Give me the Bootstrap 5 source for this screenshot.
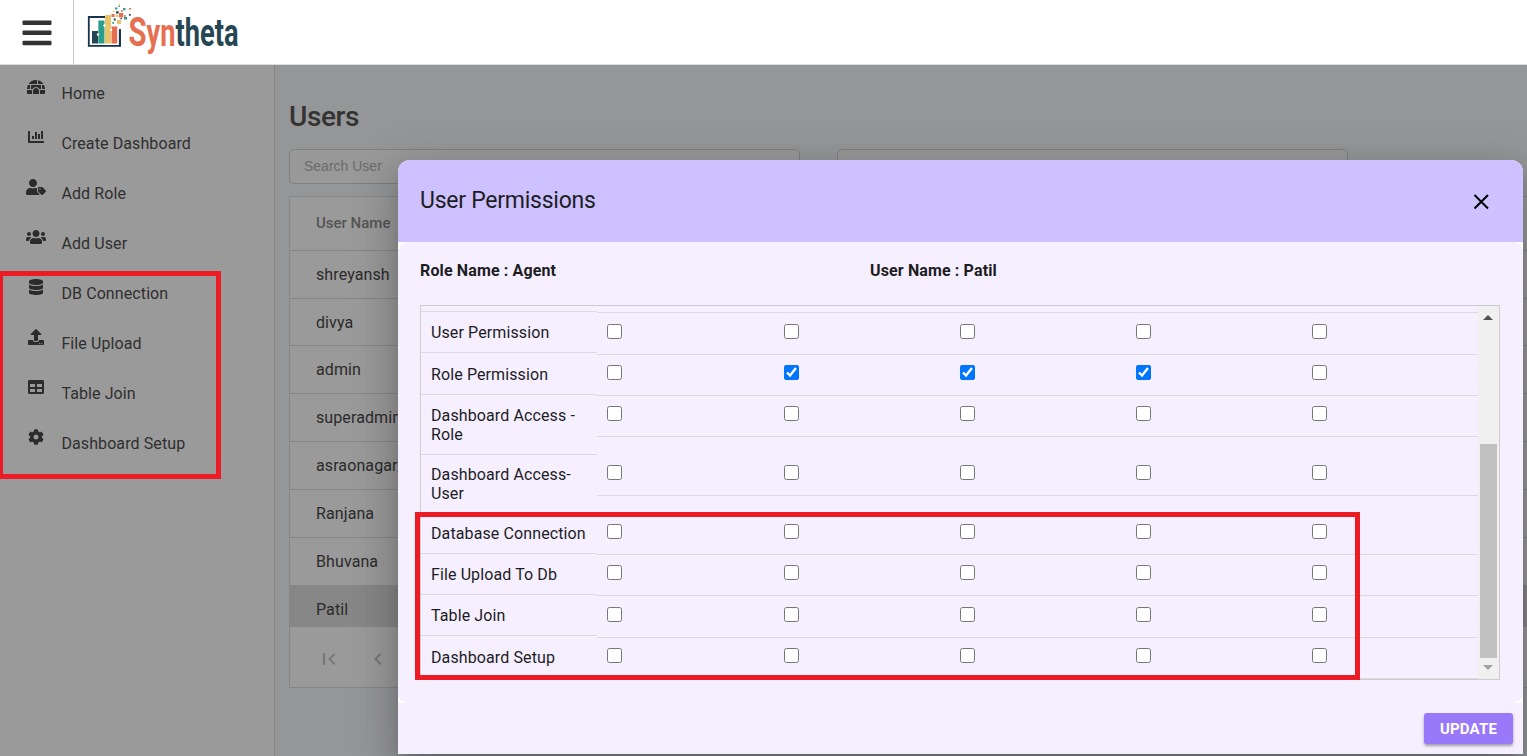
<!DOCTYPE html>
<html lang="en">
<head>
<meta charset="utf-8">
<meta name="viewport" content="width=device-width, initial-scale=1">
<title>Syntheta - Users</title>
<link href="https://cdn.jsdelivr.net/npm/bootstrap@5.3.0/dist/css/bootstrap.min.css" rel="stylesheet">
<style>
  body { font-family: Roboto, sans-serif; font-size: 16px; color: #2b2b2b; background: #959698; }
  .app { height: 756px; }
  .topbar { height: 65px; border-bottom: 1px solid #ddd; z-index: 3; }
  .burger { width: 74px; border-right: 1px solid #ccc; }
  .sidebar { width: 275px; background: #9a9a9a; border-right: 1px solid #858585; padding-top: 3px; }
  .side-link { height: 50px; padding-left: 26px; color: #2f2f2f; line-height: 52px; letter-spacing: .1px; }
  .side-link svg { width: 20px; height: 16px; margin: 11px 15.4px 0 0; fill: #2b2b2b; }
  .content { padding: 34px 0 0 14px; }
  .page-title { font-size: 28px; line-height: 36px; font-weight: 500; color: #333; margin-bottom: 14px; letter-spacing: -.4px; }
  .filters { gap: 37px; margin-bottom: 12px; }
  .search-box { width: 511px; height: 35px; border: 1px solid #808081; border-radius: 5px; background: #999; padding-left: 14px; font: 14px/33px "Liberation Sans", sans-serif; color: #6b6b6b; }
  .grid-panel { width: 1300px; border: 1px solid #858688; background: #9a9a9a; height: 492px; }
  .grid-panel > div { padding-left: 26px; }
  .grid-head { height: 54px; line-height: 53px; font-size: 15px; font-weight: 500; color: #555; border-bottom: 1px solid #858688; }
  .grid-line { height: 48px; line-height: 47px; border-bottom: 1px solid #858688; letter-spacing: .1px; }
  .grid-line:nth-child(3) { height: 47px; }
  .grid-line.picked { height: 41px; background: #878787; border: 0; }
  .pager { height: 63px; gap: 25px; }
  .pager svg { width: 24px; height: 24px; fill: #777; margin-left: .6px; }
  .overlay { z-index: 5; padding: 160px 4px 2px 398px; }
  .dialog { height: 594px; background: #fff; border-radius: 12px 12px 0 0; color: #1d1d1f;
    box-shadow: 0 11px 15px -7px rgba(0,0,0,.2), 0 24px 38px 3px rgba(0,0,0,.14), 0 9px 46px 8px rgba(0,0,0,.12); }
  .dialog-top { height: 82px; background: #cdc1ff; border-radius: 12px 12px 0 0; padding: 0 32px 0 22px; }
  .dialog-title { font-size: 23px; line-height: 28px; letter-spacing: -.25px; }
  .dialog-main { height: 461px; background: #f5efff; border-radius: 10px; padding: 18px 23px 0 22px; }
  .facts { height: 45px; font-weight: 700; line-height: 21px; letter-spacing: .13px; }
  .facts span { width: 450px; }
  .matrix { height: 375px; border: 1px solid #ccc; }
  .stub { height: 7px; }
  .stub .label-col { height: 6px; padding: 0; }
  .stub .check-col { height: 7px; padding: 0; }
  .label-col { width: 176px; height: 40px; padding: 10px 0 0 10px; line-height: 19px; letter-spacing: .11px; border-bottom: 1px solid #dcdadd; }
  .perm { height: 41px; }
  .perm.snug { height: 42px; }
  .perm.two { height: 59px; }
  .two .label-col { height: 59px; }
  .check-col { height: 41px; padding: 10px 0 0 10.3px; border-bottom: 1px solid #dcdadd; }
  .snug .check-col { height: 42px; padding-top: 10.5px; }
  .check-col input { display: block; width: 15px; height: 15px; margin: 0; }
  .rail { width: 21px; background: #f0f0f0; padding: 9px 1px 9px 0; }
  .thumb { width: 17px; height: 214px; margin-bottom: 7px; background: #c1c1c1; }
  .tri { border: 5px solid transparent; width: 0; height: 0; }
  .tri.up { border-top: 0; border-bottom-color: #505050; }
  .tri.down { border-bottom: 0; border-top-color: #a3a3a3; }
  .dialog-foot { height: 51px; background: #f5efff; padding: 10px 10px 0 0; }
  .btn-update { width: 89px; height: 31px; padding: 0; border-radius: 3px; background: #9978f9; color: #fff; font-size: 15px; font-weight: 700; line-height: 31px; letter-spacing: .15px; box-shadow: 0 2px 3px rgba(0,0,0,.35); }
  .callout { position: absolute; border: 5px solid #ed1c24; z-index: 10; }
  .callout-menu { left: -2px; top: 271px; width: 223px; height: 208px; }
  .callout-rows { left: 415px; top: 512px; width: 945px; height: 168px; }
</style>
</head>
<body class="overflow-hidden">
<div class="app d-flex flex-column position-relative overflow-hidden">
  <header class="topbar d-flex bg-white flex-shrink-0">
    <div class="burger d-flex align-items-center justify-content-center">
      <svg width="30" height="27" viewBox="0 0 30 27" fill="#333"><rect x=".5" y="1.500" width="29" height="4.600" rx="1"/><rect x=".5" y="11.500" width="29" height="4.600" rx="1"/><rect x=".5" y="21.700" width="29" height="4.600" rx="1"/></svg>
    </div>
    <svg width="180" height="64" viewBox="74 0 180 64">
      <path d="M88.8 17H119.8V45.8H88.8Z" fill="#fff" stroke="#17324d" stroke-width="1.8"/>
      <path d="M108 12H124V30H108Z" fill="#fff"/>
      <path d="M120 29V46.5" stroke="#17324d" stroke-width="1.8"/>
      <path d="M92 31H98V43.5H92Z" fill="#264653"/><path d="M98.3 20.5H104.5V43.5H98.3Z" fill="#2a9d8f"/>
      <path d="M105 15H111V43.5H105Z" fill="#e9c46a"/><path d="M111.5 26.5H117.2V43.5H111.5Z" fill="#e76f51"/>
      <g fill="#fff"><circle cx="98" cy="34.5" r="1.2"/><circle cx="104.5" cy="25.5" r="1.2"/><circle cx="111" cy="29.8" r="1.2"/></g>
      <g fill="#e76f51"><path d="M119 13h4.200v4.400H119zM111.500 14h3v3h-3zM121 10h1.700v1.700H121zM129 8h2v1.500h-2zM124 15.200h2v1.500h-2z"/></g>
      <g fill="#2a9d8f"><path d="M115 7.500h2.300v2H115zM123 8h2.500v2.300H123zM118.600 5.500h1.400V7h-1.400zM124 17h3v2.500h-3zM112.300 22h1.800v1.800h-1.800z"/></g>
      <g fill="#264653"><path d="M116 11.200h2.700v2.400H116zM113.700 18.500h2v2h-2zM129 14h1.700v1.800H129zM120.500 18h1.500v1.300h-1.500z"/></g>
      <g fill="#e9c46a"><path d="M117 20h4v4h-4zM115.500 14.500h2.600v2.600h-2.600zM118.500 4h1.500v1.300h-1.500zM112.800 10.700h1.700v1.500h-1.700z"/></g>
      <text x="128.500" y="46" font-family="Roboto, sans-serif" font-weight="700" font-size="38" fill="#e76f51" textLength="110" lengthAdjust="spacingAndGlyphs"><tspan font-size="41">S</tspan>yn<tspan fill="#264653">theta</tspan></text>
    </svg>
  </header>

  <div class="d-flex flex-grow-1">
    <nav class="sidebar flex-shrink-0">
      <div class="side-link d-flex"><svg viewBox="0 0 576 512"><path d="M320 33.900c-10.500-1.200-21.200-1.900-32-1.900-99.800 0-187.800 50.800-239.400 128H320V33.900zM96 192H30.300C11.100 230.600 0 274 0 320h96V192zM352 39.400V160h175.400C487.200 99.900 424.800 55.900 352 39.400zM480 320h96c0-46-11.100-89.400-30.300-128H480v128zm-64 64v96h128c17.700 0 32-14.300 32-32v-96H411.500c2.600 10.300 4.500 20.900 4.500 32zm32-192H128v128h49.800c22.200-38.100 63-64 110.200-64s88 25.900 110.200 64H448V192zM0 448c0 17.700 14.300 32 32 32h128v-96c0-11.200 1.900-21.700 4.500-32H0v96zm288-160c-53 0-96 43-96 96v96h192v-96c0-53-43-96-96-96z"/></svg>Home</div>
      <div class="side-link d-flex"><svg viewBox="0 0 512 512"><path d="M496 384H64V80c0-8.840-7.160-16-16-16H16C7.160 64 0 71.160 0 80v336c0 17.670 14.330 32 32 32h464c8.840 0 16-7.160 16-16v-32c0-8.840-7.160-16-16-16zM128 224h64v96h-64zM224 96h64v224h-64zM320 160h64v160h-64zM416 64h64v256h-64z"/></svg>Create Dashboard</div>
      <div class="side-link d-flex"><svg viewBox="0 0 640 512"><path d="M630.6 364.9l-90.3-90.2c-12-12-28.3-18.7-45.3-18.7h-79.3c-17.7 0-32 14.3-32 32v79.2c0 17 6.700 33.200 18.700 45.200l90.300 90.200c12.500 12.500 32.800 12.500 45.300 0l92.500-92.500c12.600-12.500 12.600-32.700.1-45.200zm-182.800-21c-13.300 0-24-10.700-24-24s10.700-24 24-24 24 10.700 24 24c0 13.200-10.700 24-24 24zm-223.800-88c70.700 0 128-57.300 128-128C352 57.300 294.700 0 224 0S96 57.300 96 128c0 70.600 57.300 127.900 128 127.900zm127.800 111.200V294c-12.200-3.600-24.900-6.200-38.200-6.200h-16.700c-22.200 10.200-46.900 16-72.900 16s-50.600-5.800-72.900-16h-16.700C60.200 287.900 0 348.100 0 422.300v41.600c0 26.500 21.500 48 48 48h352c15.500 0 29.100-7.500 37.900-18.900l-58-58c-18.100-18.100-28.100-42.200-28.100-67.900z"/></svg>Add Role</div>
      <div class="side-link d-flex"><svg viewBox="0 0 640 512"><path d="M96 224c35.300 0 64-28.700 64-64s-28.700-64-64-64-64 28.700-64 64 28.700 64 64 64zm448 0c35.300 0 64-28.700 64-64s-28.700-64-64-64-64 28.700-64 64 28.700 64 64 64zm32 32h-64c-17.600 0-33.500 7.100-45.100 18.600 40.300 22.100 68.900 62 75.100 109.400h66c17.700 0 32-14.300 32-32v-32c0-35.300-28.700-64-64-64zm-256 0c61.900 0 112-50.100 112-112S381.900 32 320 32 208 82.100 208 144s50.100 112 112 112zm76.800 32h-8.300c-20.800 10-43.900 16-68.500 16s-47.600-6-68.500-16h-8.300C179.600 288 128 339.600 128 403.200V432c0 26.500 21.500 48 48 48h288c26.500 0 48-21.500 48-48v-28.800c0-63.600-51.600-115.200-115.200-115.200zm-223.700-13.400C161.500 263.100 145.600 256 128 256H64c-35.300 0-64 28.700-64 64v32c0 17.700 14.300 32 32 32h65.900c6.300-47.400 34.900-87.300 75.200-109.400z"/></svg>Add User</div>
      <div class="side-link d-flex"><svg viewBox="0 0 448 512"><path d="M448 73.143v45.714C448 159.143 347.667 192 224 192S0 159.143 0 118.857V73.143C0 32.857 100.333 0 224 0s224 32.857 224 73.143zM448 176v102.857C448 319.143 347.667 352 224 352S0 319.143 0 278.857V176c48.125 33.143 136.208 48.572 224 48.572S399.874 209.143 448 176zm0 160v102.857C448 479.143 347.667 512 224 512S0 479.143 0 438.857V336c48.125 33.143 136.208 48.572 224 48.572S399.874 369.143 448 336z"/></svg>DB Connection</div>
      <div class="side-link d-flex"><svg viewBox="0 0 512 512"><path d="M296 384h-80c-13.300 0-24-10.700-24-24V192h-87.700c-17.800 0-26.700-21.500-14.100-34.100L242.300 5.700c7.500-7.500 19.800-7.500 27.300 0l152.200 152.200c12.600 12.600 3.700 34.100-14.100 34.100H320v168c0 13.300-10.700 24-24 24zm216-8v112c0 13.300-10.700 24-24 24H24c-13.300 0-24-10.700-24-24V376c0-13.300 10.700-24 24-24h136v8c0 30.900 25.100 56 56 56h80c30.900 0 56-25.100 56-56v-8h136c13.300 0 24 10.700 24 24zm-124 88c0-11-9-20-20-20s-20 9-20 20 9 20 20 20 20-9 20-20zm64 0c0-11-9-20-20-20s-20 9-20 20 9 20 20 20 20-9 20-20z"/></svg>File Upload</div>
      <div class="side-link d-flex"><svg viewBox="0 0 512 512"><path d="M464 32H48C21.490 32 0 53.490 0 80v352c0 26.510 21.490 48 48 48h416c26.510 0 48-21.490 48-48V80c0-26.510-21.490-48-48-48zM224 416H64v-96h160v96zm0-160H64v-96h160v96zm224 160H288v-96h160v96zm0-160H288v-96h160v96z"/></svg>Table Join</div>
      <div class="side-link d-flex"><svg viewBox="0 0 512 512"><path d="M487.400 315.700l-42.600-24.600c4.300-23.200 4.300-47 0-70.200l42.600-24.600c4.900-2.800 7.100-8.600 5.500-14-11.100-35.600-30-67.800-54.700-94.600-3.800-4.100-10-5.100-14.800-2.300L380.800 110c-17.900-15.400-38.500-27.300-60.800-35.100V25.800c0-5.600-3.900-10.500-9.400-11.700-36.700-8.200-74.300-7.800-109.200 0-5.500 1.200-9.400 6.100-9.400 11.700V75c-22.200 7.900-42.800 19.800-60.800 35.100L88.700 85.500c-4.900-2.800-11-1.900-14.800 2.300-24.700 26.700-43.600 58.900-54.700 94.600-1.700 5.400.6 11.200 5.500 14L67.300 221c-4.300 23.200-4.300 47 0 70.200l-42.600 24.600c-4.900 2.800-7.100 8.600-5.500 14 11.100 35.600 30 67.800 54.700 94.600 3.800 4.100 10 5.100 14.800 2.300l42.600-24.600c17.900 15.400 38.500 27.300 60.800 35.100v49.200c0 5.600 3.900 10.500 9.400 11.700 36.700 8.200 74.300 7.800 109.200 0 5.500-1.200 9.400-6.100 9.400-11.700v-49.200c22.200-7.900 42.800-19.800 60.800-35.100l42.600 24.600c4.900 2.800 11 1.900 14.800-2.300 24.700-26.700 43.600-58.900 54.700-94.600 1.500-5.500-.7-11.300-5.600-14.100zM256 336c-44.100 0-80-35.900-80-80s35.900-80 80-80 80 35.900 80 80-35.900 80-80 80z"/></svg>Dashboard Setup</div>
    </nav>

    <main class="content flex-grow-1">
      <h1 class="page-title">Users</h1>
      <div class="filters d-flex">
        <div class="search-box">Search User</div>
        <div class="search-box"></div>
      </div>
      <div class="grid-panel">
        <div class="grid-head">User Name</div>
        <div class="grid-line">shreyansh</div>
        <div class="grid-line">divya</div>
        <div class="grid-line">admin</div>
        <div class="grid-line">superadmin</div>
        <div class="grid-line">asraonagar_</div>
        <div class="grid-line">Ranjana</div>
        <div class="grid-line">Bhuvana</div>
        <div class="grid-line picked">Patil</div>
        <div class="pager d-flex align-items-center">
          <svg viewBox="0 0 24 24"><path d="M18.410 16.590L13.820 12l4.590-4.590L17 6l-6 6 6 6zM6 6h2v12H6z"/></svg>
          <svg viewBox="0 0 24 24"><path d="M15.410 7.410L14 6l-6 6 6 6 1.410-1.410L10.830 12z"/></svg>
        </div>
      </div>
    </main>
  </div>

  <div class="overlay position-absolute top-0 start-0 w-100 h-100">
    <section class="dialog" role="dialog" aria-label="User Permissions">
      <div class="dialog-top d-flex align-items-center justify-content-between">
        <div class="dialog-title">User Permissions</div>
        <svg width="19" height="19" viewBox="0 0 19 19" stroke="#000" stroke-width="2" fill="none"><path d="M2.500 3L16 16.500M16 3L2.500 16.500"/></svg>
      </div>
      <div class="dialog-main">
        <div class="facts d-flex"><span>Role Name : Agent</span><span>User Name : Patil</span></div>
        <div class="matrix d-flex overflow-hidden">
          <div class="flex-grow-1" id="permissions">
            <div class="stub d-flex"><div class="label-col flex-shrink-0"></div><div class="check-col flex-grow-1"></div></div>
          </div>
          <div class="rail d-flex flex-column align-items-center">
            <div class="tri up"></div>
            <div class="thumb mt-auto"></div>
            <div class="tri down"></div>
          </div>
        </div>
      </div>
      <div class="dialog-foot d-flex justify-content-end">
        <button class="btn btn-update" type="button">UPDATE</button>
      </div>
    </section>
  </div>

  <div class="callout callout-menu"></div>
  <div class="callout callout-rows"></div>
</div>

<script src="https://cdn.jsdelivr.net/npm/bootstrap@5.3.0/dist/js/bootstrap.bundle.min.js"></script>
<script>
  const rows = [
    ['User Permission', 'snug', []],
    ['Role Permission', '', [1, 2, 3]],
    ['Dashboard Access -<br>Role', 'two', []],
    ['Dashboard Access-<br>User', 'two', []],
    ['Database Connection', '', []],
    ['File Upload To Db', '', []],
    ['Table Join', 'snug', []],
    ['Dashboard Setup', '', []]
  ];
  document.getElementById('permissions').insertAdjacentHTML('beforeend', rows.map(([label, kind, on]) =>
    `<div class="perm d-flex ${kind}"><div class="label-col flex-shrink-0">${label}</div>` +
    [0, 1, 2, 3, 4].map(i => `<div class="check-col col"><input type="checkbox" aria-label="Permission ${i + 1}"${on.includes(i) ? ' checked' : ''}></div>`).join('') +
    '</div>').join(''));
</script>
</body>
</html>
